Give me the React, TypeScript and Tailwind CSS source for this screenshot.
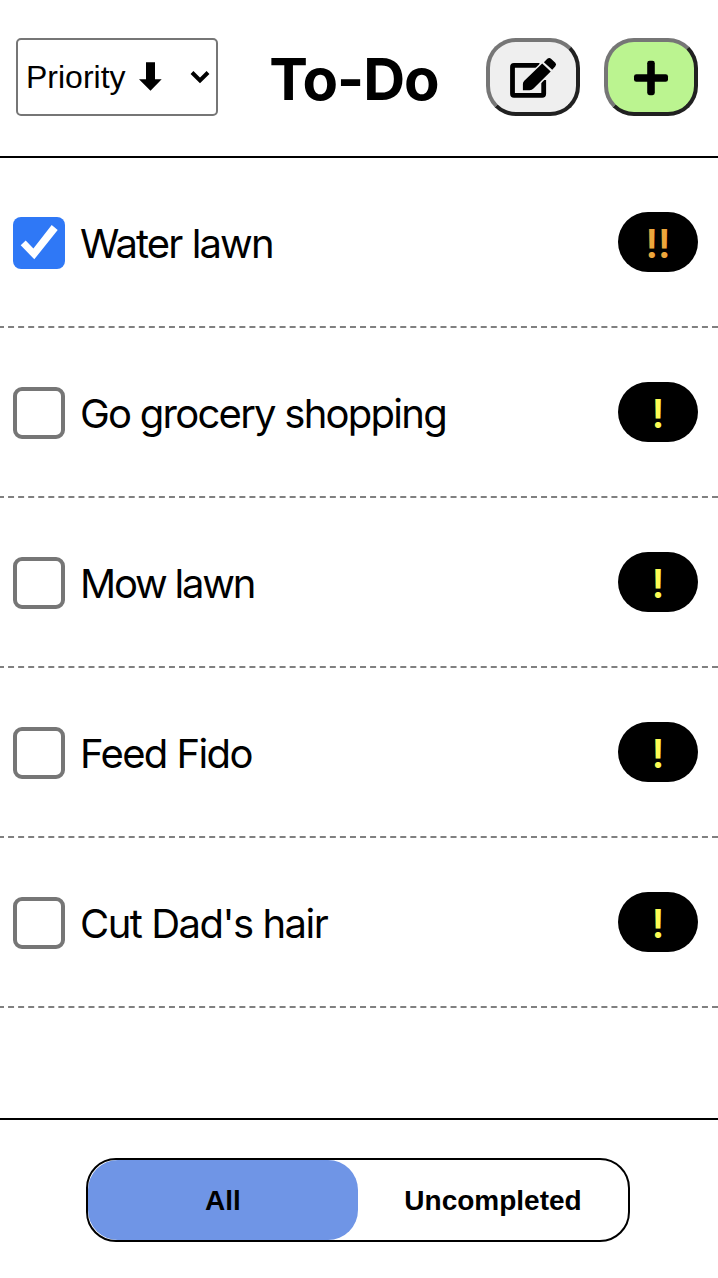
import { useState } from "react";

type Task = { name: string; done: boolean; level: 1 | 2; tracking: string };

const initialTasks: Task[] = [
  { name: "Water lawn", done: true, level: 2, tracking: "tracking-[-1.9px] [word-spacing:1px]" },
  { name: "Go grocery shopping", done: false, level: 1, tracking: "tracking-[-1.75px]" },
  { name: "Mow lawn", done: false, level: 1, tracking: "tracking-[-2.2px]" },
  { name: "Feed Fido", done: false, level: 1, tracking: "tracking-[-1.6px]" },
  { name: "Cut Dad's hair", done: false, level: 1, tracking: "tracking-[-1.5px]" },
];

function EditIcon() {
  return (
    <svg className="h-[50px] w-[56px]" viewBox="505 52 56 50" aria-hidden="true">
      <path
        d="M539.5 65.4H514a1.5 1.5 0 0 0-1.5 1.5V93.8a1.5 1.5 0 0 0 1.5 1.5h28.2a1.5 1.5 0 0 0 1.5-1.5V80"
        fill="none"
        stroke="#000"
        strokeWidth="4.8"
      />
      <path
        d="M542.2 63.6L550.7 71.6L533.5 88.6Q532 90.2 529.5 90.3H522.9V84Q522.9 82.3 524.3 80.8Z"
        fill="#000"
        stroke="#efefef"
        strokeWidth="3"
        paintOrder="stroke"
      />
      <path
        d="M543.9 62.3L547.3 58.8Q549.3 57 551.3 58.9L555.3 62.8Q557 64.6 555.2 66.5L552.2 69.7Z"
        fill="#000"
      />
    </svg>
  );
}

function PlusIcon() {
  return (
    <svg className="mt-0.5 size-9" viewBox="0 0 36 36" aria-hidden="true">
      <rect x="1" y="14.2" width="34" height="7.6" rx="2.4" />
      <rect x="14.2" y="0.8" width="7.6" height="34.4" rx="2.4" />
    </svg>
  );
}

function Checkbox({ checked, label, onToggle }: { checked: boolean; label: string; onToggle: () => void }) {
  return (
    <button
      role="checkbox"
      aria-checked={checked}
      aria-label={label}
      onClick={onToggle}
      className={
        checked
          ? "mt-0.5 size-[52px] shrink-0 rounded-[8px] bg-[#2f78f6]"
          : "mt-0.5 size-[52px] shrink-0 rounded-[9px] border-4 border-[#767676] bg-white"
      }
    >
      {checked && (
        <svg className="size-[52px]" viewBox="0 0 52 52" aria-hidden="true">
          <path d="M7.7 28.3L12.7 23.4L20.4 31.5L38.7 8L44.7 13L21.3 42.3Z" fill="#fff" />
        </svg>
      )}
    </button>
  );
}

function PriorityBadge({ level }: { level: 1 | 2 }) {
  return (
    <span
      className={
        level === 2
          ? "flex h-[60px] w-20 items-center justify-center rounded-[30px] bg-black pt-[3px] font-['Inter',sans-serif] text-[39px] leading-none font-semibold text-[#eda63c]"
          : "flex h-[60px] w-20 items-center justify-center rounded-[30px] bg-black pt-[3px] font-['Inter',sans-serif] text-[39px] leading-none font-semibold text-[#fdfb54]"
      }
    >
      {level === 2 ? "!!" : "!"}
    </span>
  );
}

export default function App() {
  const [tasks, setTasks] = useState(initialTasks);
  const [filter, setFilter] = useState<"all" | "open">("all");
  const toggle = (i: number) => setTasks(tasks.map((t, n) => (n === i ? { ...t, done: !t.done } : t)));
  const shown = tasks.map((t, i) => ({ t, i })).filter(({ t }) => filter === "all" || !t.done);

  return (
    <div className="flex h-[1278px] w-full flex-col overflow-hidden bg-white font-['Inter',sans-serif] text-black">
      <header className="flex h-[158px] shrink-0 items-start border-b-2 border-black pt-[38px] pr-5 pl-4">
        <button className="flex h-[78px] w-[202px] items-center rounded-[5px] border-2 border-[#767676] bg-white pl-2 font-['Liberation_Sans',sans-serif] text-[32px] leading-none">
          <span>Priority</span>
          <svg className="mb-0.5 ml-[12px] h-[30px] w-6" viewBox="0 0 24 30" aria-hidden="true">
            <path d="M8 1.2h9V18.3h6.7L12.5 29.8L1 18.3h7Z" fill="#000" />
          </svg>
          <svg className="ml-7 h-[14px] w-5" viewBox="0 0 20 14" aria-hidden="true">
            <path d="M2 2.5L10 10.5L18 2.5" fill="none" stroke="#000" strokeWidth="4" />
          </svg>
        </button>
        <h1 className="flex h-[82px] flex-1 items-center justify-center pl-1 text-[58px] leading-none font-bold tracking-[-1px]">
          To-Do
        </h1>
        <button
          aria-label="Edit"
          className="flex h-[78px] w-[94px] items-center justify-center rounded-[30px] border-4 border-t-[#767676] border-r-[#212121] border-b-[#212121] border-l-[#767676] bg-[#efefef]"
        >
          <EditIcon />
        </button>
        <button
          aria-label="Add"
          className="ml-6 flex h-[78px] w-[94px] items-center justify-center rounded-[30px] border-4 border-t-[#767676] border-r-[#212121] border-b-[#212121] border-l-[#767676] bg-[#bbf490]"
        >
          <PlusIcon />
        </button>
      </header>

      <ul className="-ml-0.5 flex-1">
        {shown.map(({ t, i }) => (
          <li
            key={t.name}
            className="flex h-[170px] items-center border-b-2 border-dashed border-[#808080] pr-5 pl-[15px]"
          >
            <Checkbox checked={t.done} label={t.name} onToggle={() => toggle(i)} />
            <span className={`mt-1 ml-[15px] flex-1 text-[40px] leading-none ${t.tracking}`}>{t.name}</span>
            <PriorityBadge level={t.level} />
          </li>
        ))}
      </ul>

      <footer className="flex h-[160px] shrink-0 justify-center border-t-2 border-black pt-[38px]">
        <div className="mr-0.5 grid h-[84px] w-[544px] grid-cols-2 rounded-[30px] border-2 border-black font-['Liberation_Sans',sans-serif] text-[28px] font-bold">
          <button
            onClick={() => setFilter("all")}
            className={filter === "all" ? "rounded-[30px] bg-[#6f95e6] pt-0.5" : "rounded-[30px] pt-0.5"}
          >
            All
          </button>
          <button
            onClick={() => setFilter("open")}
            className={filter === "open" ? "rounded-[30px] bg-[#6f95e6] pt-0.5" : "rounded-[30px] pt-0.5"}
          >
            Uncompleted
          </button>
        </div>
      </footer>
    </div>
  );
}
